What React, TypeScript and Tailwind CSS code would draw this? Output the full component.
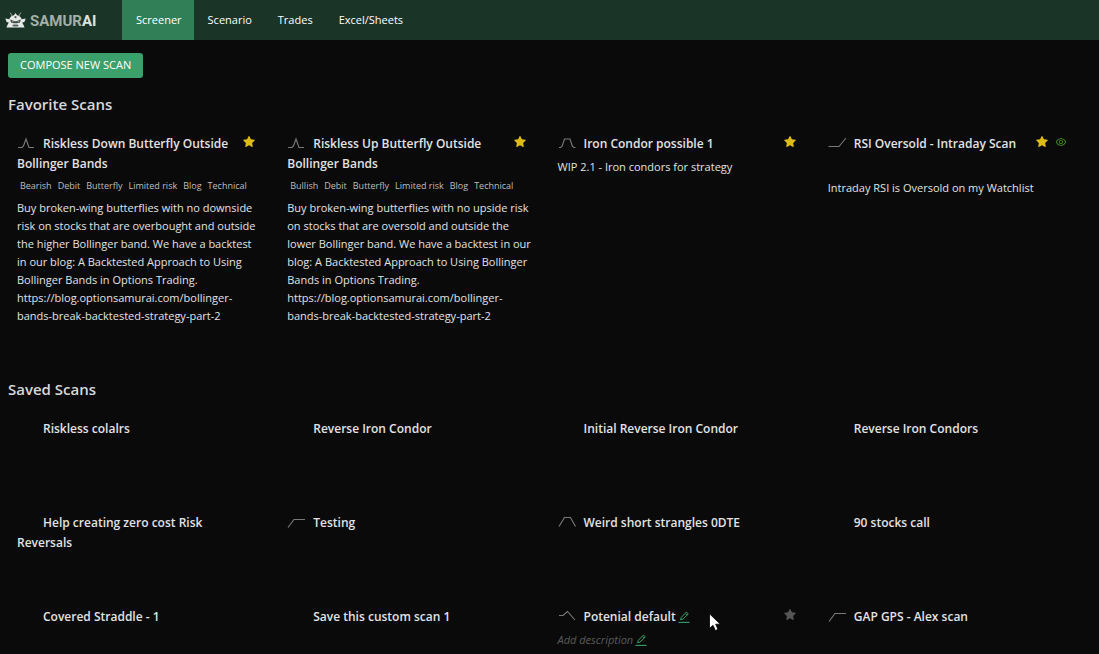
import type { ReactNode } from 'react';
import clsx from 'clsx';
import { AiFillStar, AiOutlineEye } from 'react-icons/ai';

type Shape = 'butterfly' | 'condor' | 'call' | 'cap' | 'strangle' | 'roof';

interface Scan {
    name: string;
    shape?: Shape;
    tags?: string[];
    description?: string;
    favorite?: boolean;
    watched?: boolean;
    active?: boolean;
}

const navItems = ['Screener', 'Scenario', 'Trades', 'Excel/Sheets'];

const favoriteScans: Scan[] = [
    {
        name: 'Riskless Down Butterfly Outside Bollinger Bands',
        shape: 'butterfly',
        tags: ['Bearish', 'Debit', 'Butterfly', 'Limited risk', 'Blog', 'Technical'],
        description:
            'Buy broken-wing butterflies with no downside risk on stocks that are overbought and outside the higher Bollinger band. We have a backtest in our blog: A Backtested Approach to Using Bollinger Bands in Options Trading. https://blog.optionsamurai.com/bollinger-bands-break-backtested-strategy-part-2',
        favorite: true
    },
    {
        name: 'Riskless Up Butterfly Outside Bollinger Bands',
        shape: 'butterfly',
        tags: ['Bullish', 'Debit', 'Butterfly', 'Limited risk', 'Blog', 'Technical'],
        description:
            'Buy broken-wing butterflies with no upside risk on stocks that are oversold and outside the lower Bollinger band. We have a backtest in our blog: A Backtested Approach to Using Bollinger Bands in Options Trading. https://blog.optionsamurai.com/bollinger-bands-break-backtested-strategy-part-2',
        favorite: true
    },
    {
        name: 'Iron Condor possible 1',
        shape: 'condor',
        description: 'WIP 2.1 - Iron condors for strategy',
        favorite: true
    },
    {
        name: 'RSI Oversold - Intraday Scan',
        shape: 'call',
        tags: [],
        description: 'Intraday RSI is Oversold on my Watchlist',
        favorite: true,
        watched: true
    }
];

const savedScans: Scan[] = [
    { name: 'Riskless colalrs' },
    { name: 'Reverse Iron Condor' },
    { name: 'Initial Reverse Iron Condor' },
    { name: 'Reverse Iron Condors' },
    { name: 'Help creating zero cost Risk Reversals' },
    { name: 'Testing', shape: 'cap' },
    { name: 'Weird short strangles 0DTE', shape: 'strangle' },
    { name: '90 stocks call' },
    { name: 'Covered Straddle - 1' },
    { name: 'Save this custom scan 1' },
    { name: 'Potenial default', shape: 'roof', active: true },
    { name: 'GAP GPS - Alex scan', shape: 'cap' }
];

// Payoff diagrams
const shapePaths: Record<Shape, string> = {
    butterfly: 'M1 11.5H5L6.5 10L9 3L12 11.5H17',
    condor: 'M1 11.5H2.5L4 10.5L6.5 3H12L14.5 10.5L16 11.5H17.5',
    call: 'M0.5 10.5H11L18 2',
    cap: 'M1 12.5L7 4.5H18',
    strangle: 'M1 11.5L6.5 2.5H12.5L17.5 11.5',
    roof: 'M1 6.5H5L9.5 2.5L17 11'
};

function ShapeIcon({ shape }: { shape?: Shape }) {
    return (
        <svg className="mr-2 inline-block h-3.5 w-[18px] align-[-2px]" viewBox="0 0 18 14" fill="none" aria-hidden="true">
            {shape && <path d={shapePaths[shape]} stroke="#7a7a7a" strokeWidth={1.1} />}
        </svg>
    );
}

function EditButton({ label }: { label: string }) {
    return (
        <button type="button" aria-label={label} className="ml-0.5 inline-block align-[-2px] text-[#36a269]">
            <svg className="h-3 w-3" viewBox="0 0 12 12" fill="none" stroke="currentColor">
                <path d="M2.6 8.8L3.2 6.4L8.4 1.1L10.3 2.9L5 8.1Z" strokeWidth={1} />
                <path d="M7.2 2.4L9.1 4.2" strokeWidth={0.8} />
                <path d="M0.5 11.4H11.5" strokeWidth={1.1} />
            </svg>
        </button>
    );
}

function Logo() {
    return (
        <a href="#" className="flex w-[122px] items-center gap-1 pl-[5px] font-[Roboto,sans-serif]" aria-label="Samurai">
            <svg className="h-[17px] w-[21px]" viewBox="0 0 21 17" aria-hidden="true">
                <path d="M5.2 0.6L7.2 4.2M15.8 0.6L13.8 4.2" stroke="#9aa69f" strokeWidth={1} />
                <path d="M10.5 1L12 3.2C14.6 3.6 16.2 5.2 16.6 7.2L20.7 6.6L19.4 10L17.2 10.4L18.4 12.8L19.6 15.6H1.4L2.6 12.8L3.8 10.4L1.6 10L0.3 6.6L4.4 7.2C4.8 5.2 6.4 3.6 9 3.2Z" fill="#e6e9e7" />
                <path d="M5.2 7.6L9.8 9.2H11.2L15.8 7.6L15 10.6L12 11.2H9L6 10.6Z" fill="#3e4d45" />
                <path d="M7 9.2L9 10H7.4ZM14 9.2L12 10H13.6Z" fill="#ffffff" />
                <path d="M7.2 13.6L8.6 12.4H12.4L13.8 13.6L12.6 14.4H8.4Z" fill="#56655d" />
                <circle cx="10.5" cy="5.2" r="1.1" fill="#4c5b53" />
            </svg>
            <span className="pt-0.5 text-[15px] font-bold text-[#a3afa9]">
                SAMUR<span className="text-[#dfe4e1]">AI</span>
            </span>
        </a>
    );
}

function ScanCard({ scan }: { scan: Scan }) {
    return (
        <article className="pl-[9px]">
            <div className="flex items-start gap-1.5 pr-[22px]">
                <h3 className="flex-1 text-xs leading-5 font-semibold text-[#e2e2e2]">
                    <ShapeIcon shape={scan.shape} />
                    {scan.name}
                    {scan.active && <EditButton label="Rename scan" />}
                </h3>
                {(scan.favorite || scan.active) && (
                    <button
                        type="button"
                        aria-label="Toggle favorite"
                        className={clsx('mt-px', scan.favorite ? 'text-[#dcbc14]' : 'text-[#555555]')}
                    >
                        <AiFillStar size={14} />
                    </button>
                )}
                {scan.watched && <AiOutlineEye size={12} className="mt-0.5 text-[#439a1a]" />}
            </div>
            {scan.tags && (
                <ul className="mt-1 flex h-[21px] gap-1.5 pl-[3px] text-[9px] leading-4 whitespace-nowrap text-[#bebebe]">
                    {scan.tags.map((tag) => (
                        <li key={tag}>{tag}</li>
                    ))}
                </ul>
            )}
            {scan.description && (
                <p className={clsx('pr-[17px] leading-[18px] text-[#e2e2e2]', !scan.tags && 'mt-1')}>
                    {scan.description}
                </p>
            )}
            {scan.active && (
                <p className="mt-1 leading-[18px] text-[#5a5a5a] italic">
                    Add description
                    <EditButton label="Edit description" />
                </p>
            )}
        </article>
    );
}

function Section({ title, children }: { title: string; children: ReactNode }) {
    return (
        <section>
            <h2 className="text-[15px] leading-5 font-semibold text-[#d8d8d8]">{title}</h2>
            {children}
        </section>
    );
}

export default function App() {
    return (
        <div className="relative h-screen overflow-hidden bg-[#0a0a0a] font-['Open_Sans',sans-serif] text-[11px] text-[#e2e2e2]">
            <header className="flex h-10 bg-[#1b3428]">
                <Logo />
                <nav className="flex">
                    {navItems.map((item, i) => (
                        <a
                            key={item}
                            href="#"
                            className={clsx('flex items-center pr-3 pl-[14px] text-white', i === 0 && 'bg-[#317f57]')}
                        >
                            {item}
                        </a>
                    ))}
                </nav>
            </header>
            <main className="pt-[13px] pr-[10px] pl-2">
                <button type="button" className="mb-4 block h-[25px] rounded-[3px] bg-[#3ba06c] px-3 text-white">
                    COMPOSE NEW SCAN
                </button>
                <Section title="Favorite Scans">
                    <div className="mt-5 grid min-h-[245px] grid-cols-4">
                        {favoriteScans.map((scan) => (
                            <ScanCard key={scan.name} scan={scan} />
                        ))}
                    </div>
                </Section>
                <Section title="Saved Scans">
                    <div className="mt-5 grid auto-rows-[94px] grid-cols-4">
                        {savedScans.map((scan) => (
                            <ScanCard key={scan.name} scan={scan} />
                        ))}
                    </div>
                </Section>
            </main>
            <svg className="absolute top-[613px] left-[709px] h-[19px] w-3" viewBox="0 0 12 19" aria-hidden="true">
                <path d="M0.5 0.8V15.6L4 12.3L6.3 17.6L9 16.4L6.7 11.2H11.4Z" fill="#ffffff" stroke="#000000" strokeWidth={0.8} />
            </svg>
        </div>
    );
}
